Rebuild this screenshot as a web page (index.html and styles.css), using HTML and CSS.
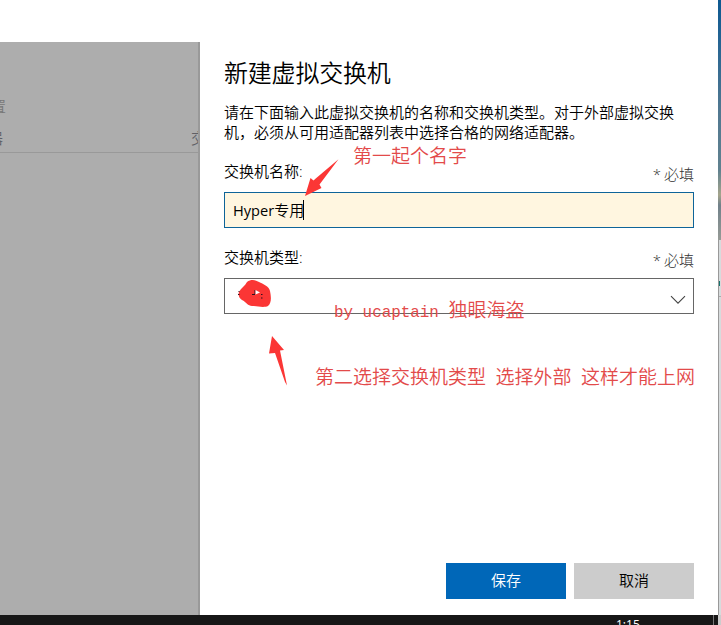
FILE: index.html
```
<!DOCTYPE html>
<html lang="zh-CN">
<head>
<meta charset="utf-8">
<title>新建虚拟交换机</title>
<link rel="stylesheet" href="styles.css">
</head>
<body>
<div class="screen">
  <div class="window">
    <div class="backdrop">
      <div class="backdrop-title">置</div>
      <div class="backdrop-head"><span class="col-a">器</span><span class="col-b">交</span></div>
    </div>
    <main class="panel">
      <h1>新建虚拟交换机</h1>
      <p class="intro">请在下面输入此虚拟交换机的名称和交换机类型。对于外部虚拟交换机，必须从可用适配器列表中选择合格的网络适配器。</p>
      <div class="label-row"><span>交换机名称:</span><span class="required">* 必填</span></div>
      <div class="field name-field"><span><span class="hyper">Hyper</span>专用</span><i class="caret"></i></div>
      <div class="label-row second"><span>交换机类型:</span><span class="required">* 必填</span></div>
      <div class="field select-field">
        <svg class="chevron" width="16" height="10" viewBox="0 0 16 10"><path d="M1 1.2L8 8.2L15 1.2" fill="none" stroke="#444" stroke-width="1.1"/></svg>
      </div>
      <div class="actions"><button class="save">保存</button><button class="cancel">取消</button></div>
    </main>
    <div class="desktop"><div class="wallpaper"></div><div class="other-window"><i class="dot"></i><i class="rule"></i></div></div>
  </div>
  <footer class="taskbar"><span class="clock">1:15</span><i class="show-desktop"></i></footer>

  <svg class="marks" width="721" height="625" viewBox="0 0 721 625">
    <g fill="#fb3635">
      <path d="M338.500 159.300L319.500 184.500L321.500 188L305 196L310.500 178L313.500 180.500L316 178.300Z"/>
      <path d="M272 336L284 350L280 350.500L287 385.500L285 382L275 353L269 353.500Z"/>
      <path d="M239 292C241 288 245 286 247 282C251 279 256 280 259 282C263 284 269 286 270 291C271 296 272 303 268 306C264 308 256 306 252 306C248 306 246 302 242 300C239 298 238 295 239 292Z"/>
    </g>
    <path d="M238.500 291.500h1M238 294.500h1.500M255 290v4M252 294.500h3M261 294.500h1.500M261 298h1.500" stroke="#301020" fill="none"/>
    <path d="M255.500 290L260 292.500L255.500 294.500Z" fill="#fff"/>
  </svg>
  <div class="note note-one">第一起个名字</div>
  <div class="note note-by"><span class="latin">by ucaptain </span>独眼海盗</div>
  <div class="note note-two">第二选择交换机类型 选择外部 这样才能上网</div>
</div>
</body>
</html>
```
FILE: styles.css
```
* { box-sizing: border-box; }
body {
  margin: 0;
  background: #fff;
  color: #000;
  font: 350 15px/20px "Open Sans", "Noto Sans CJK SC", sans-serif;
}
.screen {
  position: relative;
  display: flex;
  flex-direction: column;
  width: 721px;
  height: 625px;
  overflow: hidden;
}
.window { display: flex; height: 615px; }
.backdrop {
  width: 200px;
  margin-top: 42px;
  padding-top: 52px;
  background: #adadad;
  border-right: 2px solid #999;
  color: #777;
  overflow: hidden;
}
.backdrop-title { margin-left: -9px; height: 24px; line-height: 24px; }
.backdrop-head {
  display: flex;
  justify-content: space-between;
  height: 35px;
  padding-top: 10px;
  border-bottom: 1px solid #999;
  color: #606066;
}
.col-a { margin-left: -12px; }
.col-b { width: 7px; overflow: hidden; white-space: nowrap; }
.panel { width: 518px; padding: 57px 24px 0; }
h1 { margin: 0 0 13px; font-size: 24px; font-weight: 350; line-height: 32px; letter-spacing: -0.2px; }
.intro { width: 455px; height: 40px; margin: 0 0 19px; }
.label-row { display: flex; justify-content: space-between; height: 31px; }
.label-row.second { margin-top: 19px; }
.required { padding-top: 3px; color: #333; font-weight: 300; word-spacing: -1px; }
.field {
  display: flex;
  align-items: center;
  width: 470px;
  height: 36px;
}
.name-field { padding-left: 8px; background: #fff6e0; border: 1px solid #0e6499; }
.hyper { font-weight: 400; font-size: 14.6px; }
.caret { width: 1px; height: 20px; margin-left: -1px; background: #000; }
.select-field { justify-content: flex-end; padding: 8px 7px 0 0; border: 1px solid #666; }
.actions { display: flex; justify-content: flex-end; gap: 8px; width: 470px; margin-top: 249px; }
button {
  width: 120px;
  height: 36px;
  padding: 0 0 2px;
  border: 0;
  font: inherit;
  font-weight: 350;
}
.save { background: #0067b8; color: #fff; }
.cancel { background: #ccc; color: #000; }
.desktop { width: 3px; }
.wallpaper {
  height: 240px;
  background: linear-gradient(#0d5991 0, #246493 40px, #517891 110px, #60818f 170px, #a5a58c 195px, #71818a 205px, #969b96 240px);
}
.other-window { height: 375px; padding-top: 41px; background: #d7dbdc; border-left: 1px solid #999; }
.dot { display: block; width: 1px; height: 5px; background: #17736e; }
.rule { display: block; height: 1px; margin-top: 10px; background: #aaa; }
.taskbar { display: flex; height: 10px; padding-left: 616px; background: #171717; overflow: hidden; color: #fff; }
.clock { width: 97px; font: 500 12px/20px "Open Sans", sans-serif; }
.show-desktop { width: 8px; height: 10px; border-left: 1px solid #777; border-right: 3px solid #ccc; }
.marks { position: absolute; top: 0; left: 0; }
.note {
  position: absolute;
  color: #e34a4a;
  font: 350 19px/24px "Liberation Mono", "Noto Sans CJK SC", monospace;
  white-space: pre;
  word-spacing: -1.9px;
}
.note-one { left: 353px; top: 146px; }
.note-by { left: 334px; top: 300px; }
.note-two { left: 315px; top: 367px; }
.latin { font-family: "Liberation Mono", monospace; font-size: 15.9px; word-spacing: 0; }
```
